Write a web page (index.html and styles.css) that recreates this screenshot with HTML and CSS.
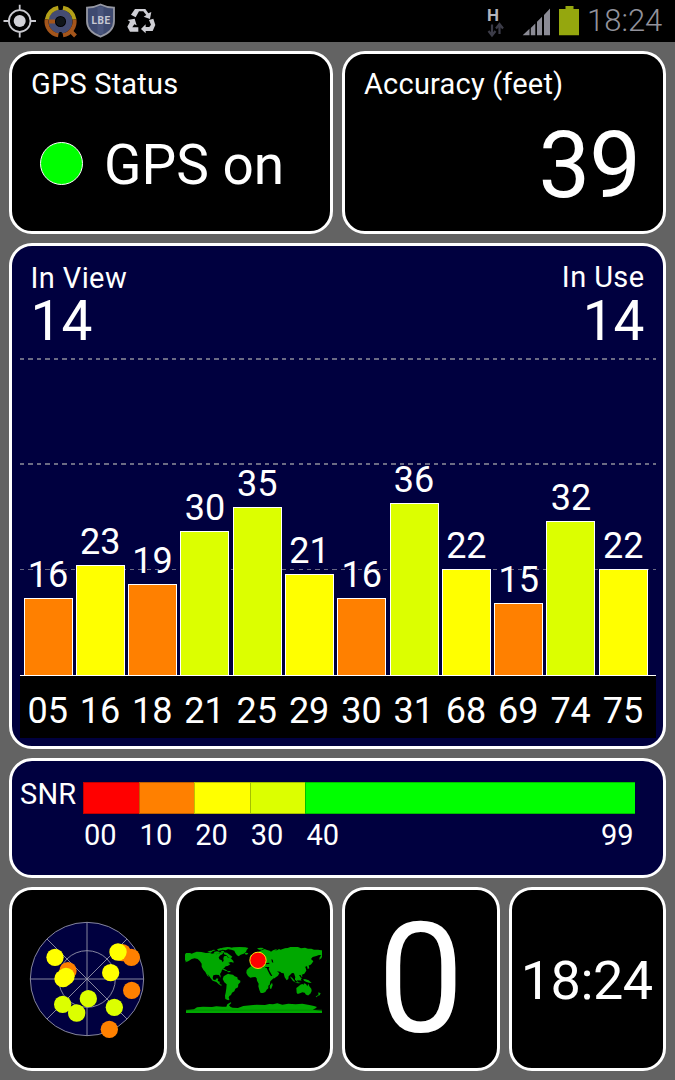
FILE: index.html
```html
<!DOCTYPE html>
<html lang="en">
<head>
  <meta charset="UTF-8" />
  <meta name="viewport" content="width=device-width, initial-scale=1.0"/>
  <title>GPS Status</title>
  <link rel="stylesheet" href="styles.css">
</head>
<body>
  <div class="statusbar">
    <svg class="tray" width="160" height="42" viewBox="0 0 160 42">
      <!-- location -->
      <g fill="none" stroke="#c9c9cf" stroke-width="1.8">
        <circle cx="19.700" cy="21" r="10.800"/>
        <path d="M19.700 4.800v6M19.700 31.500v6M3.500 21h6M30 21h6"/>
      </g>
      <circle cx="19.700" cy="21" r="6" fill="#d2d2d8"/>
      <!-- ring -->
      <circle cx="60.500" cy="21.500" r="8.800" fill="none" stroke="#454c72" stroke-width="6.500"/>
      <g fill="none" stroke-width="4">
        <path d="M46.800 19.500a14 14 0 0 1 11.500-11.800M63 7.700a14 14 0 0 1 11.500 11.800" stroke="#b3a018"/>
        <path d="M46.600 19.500a14 14 0 0 0 11.700 15.800M63 35.300a14 14 0 0 0 11.500-15.800" stroke="#a4551b"/>
        <path d="M49 21.500h6M69.500 30l6 6" stroke="#a4551b" stroke-width="4"/>
      </g>
      <circle cx="60.500" cy="21.500" r="4.600" fill="#10151a"/>
      <path d="M60.500 5v5M60.500 32v5" stroke="#000" stroke-width="2.500"/>
      <!-- shield -->
      <path d="M100.500 4.500c4 2 8.500 3 13.500 3.200v13.500c0 7.500-6 12.500-13.500 15.500C93 33.700 87 28.700 87 21.200V7.700c5-.2 9.500-1.200 13.500-3.200z" fill="#3e4a70" stroke="#9698a3" stroke-width="1.800"/>
      <path d="M100.500 7v27" stroke="#5a6790" stroke-width="6" opacity=".4"/>
      <text class="lbe" x="101" y="23.500">LBE</text>
      <!-- recycle -->
      <g fill="#cfcfd5" transform="scale(.3333)">
        <path d="M393 44l12-17h31l9 13 9-4-4 21-19-7 8-5-9-11h-13l-10 18z"/>
        <path d="M447 60l13-4 6 19-8 18h-21v7l-14-13 14-14v8h11l5-7z"/>
        <path d="M383 60l21-4 6 20-7-3-6 9h18v13h-25l-8-15 8-15z"/>
      </g>
    </svg>
    <svg class="signals" width="100" height="42" viewBox="482 0 100 42">
      <text class="hspa" x="487" y="20.700">H</text>
      <path d="M492 24.500v11M488.500 31l3.500 4.500 3.500-4.500M499.500 34v-9.500M496 28.500l3.500-4.500 3.500 4.500" fill="none" stroke="#3c3c48" stroke-width="2.200"/>
      <path d="M522.700 35.300l6.800-6.500v6.500zM530.800 28l4.500-4.500v11.800h-4.500zM537 21.800l5-5v18.500h-5zM544 15l6-6.500v26.800h-6z" fill="#8b8b95"/>
      <path d="M565.500 6h8v3h5.500v26.300h-20V9h6.500z" fill="#95a70e"/>
    </svg>
    <span class="time">18:24</span>
  </div>

  <div class="screen">
    <div class="panel status">
      <div class="title">GPS Status</div>
      <div class="state"><span class="dot"></span>GPS on</div>
    </div>

    <div class="panel accuracy">
      <div class="title">Accuracy (feet)</div>
      <div class="feet">39</div>
    </div>

    <div class="panel blue chart">
      <div class="counts">
        <div>
          <div class="title">In View</div>
          <div class="count">14</div>
        </div>
        <div class="in-use">
          <div class="title">In Use</div>
          <div class="count">14</div>
        </div>
      </div>
      <div class="plot">
        <div class="line line1"></div>
        <div class="line line2"></div>
        <div class="line line3"></div>
        <div class="sat"><span>16</span><div class="bar orange" style="height: 77px"></div></div>
        <div class="sat"><span>23</span><div class="bar yellow" style="height: 110px"></div></div>
        <div class="sat"><span>19</span><div class="bar orange" style="height: 91px"></div></div>
        <div class="sat"><span>30</span><div class="bar lime" style="height: 144px"></div></div>
        <div class="sat"><span>35</span><div class="bar lime" style="height: 168px"></div></div>
        <div class="sat"><span>21</span><div class="bar yellow" style="height: 101px"></div></div>
        <div class="sat"><span>16</span><div class="bar orange" style="height: 77px"></div></div>
        <div class="sat"><span>36</span><div class="bar lime" style="height: 172px"></div></div>
        <div class="sat"><span>22</span><div class="bar yellow" style="height: 106px"></div></div>
        <div class="sat"><span>15</span><div class="bar orange" style="height: 72px"></div></div>
        <div class="sat"><span>32</span><div class="bar lime" style="height: 154px"></div></div>
        <div class="sat"><span>22</span><div class="bar yellow" style="height: 106px"></div></div>
      </div>
      <div class="ids">
        <span>05</span><span>16</span><span>18</span><span>21</span><span>25</span><span>29</span>
        <span>30</span><span>31</span><span>68</span><span>69</span><span>74</span><span>75</span>
      </div>
    </div>

    <div class="panel blue snr">
      <div class="title">SNR</div>
      <div class="scale">
        <div class="step"><div class="red"></div><span>00</span></div>
        <div class="step"><div class="orange"></div><span>10</span></div>
        <div class="step"><div class="yellow"></div><span>20</span></div>
        <div class="step"><div class="lime"></div><span>30</span></div>
        <div class="step rest"><div class="green"></div><p><span>40</span><span>99</span></p></div>
      </div>
    </div>

    <div class="tiles">
      <div class="panel tile">
        <svg class="radar" width="124" height="124" viewBox="76 96 372 372">
          <g fill="none" stroke="#9a9aae" stroke-width="2.600">
            <circle cx="262" cy="282" r="170" fill="#00003f"/>
            <circle cx="262" cy="282" r="85"/>
            <path d="M262 112v340M92 282h340M142 162l240 240M382 162L142 402"/>
          </g>
          <g fill="#ff8000">
            <circle cx="368" cy="203" r="26"/>
            <circle cx="395" cy="217" r="26"/>
            <circle cx="205" cy="257" r="26"/>
            <circle cx="396" cy="316" r="26"/>
            <circle cx="329" cy="433" r="26"/>
          </g>
          <g fill="#ffff00">
            <circle cx="355" cy="201" r="26"/>
            <circle cx="166" cy="217" r="26"/>
            <circle cx="333" cy="263" r="26"/>
            <circle cx="199" cy="274" r="26"/>
            <circle cx="190" cy="281" r="26"/>
          </g>
          <g fill="#dcff00">
            <circle cx="266" cy="341" r="26"/>
            <circle cx="189" cy="358" r="26"/>
            <circle cx="231" cy="384" r="26"/>
            <circle cx="344" cy="367" r="26"/>
          </g>
        </svg>
      </div>

      <div class="panel tile">
        <svg class="map" width="137" height="66" viewBox="30 51 411 198">
          <g fill="#00a800">
            <!-- north america -->
            <path d="M33 69h12l5 2 7-3 8-3 14 1 14 3 10-1 8 3 9-2 5 4 9-3 3-4 8 2-3 5-6 3-5 6 2 6 7 3 3 6 3-5-1-7 2-6 8-2 4 6 5-1 5 4 6 7 1 5-8-2-8 2 6 5-8 5-6 1-5 6-6 4-2 7-4 6 2 6-1 5-4-8-9-1-8 2-2 8 3 6 6-1 3-4 5 1-2 7 6 2 0 7 7 3-3 2-7-4-7-7-11-4-6-7-5-8-5-5 5 9-5-4-6-11-6-7-5-9 0-9-5-7-7-7-9-2-9 2-8 5-6 3-10 3 9-5-8-3 1-5-8-2 6-3z"/>
            <path d="M97 65l9-3 8 2-7 4zM108 61l9-2 5 2-8 2zM116 66l10-2 9 2-3 5-11 1zM126 58l12-4 9 2-8 5-9 1zM137 63l8-1 4 5-7 1zM142 53l15-2 12 1-9 5-8 4-9-2zM146 67l10 1 9 7 7 5-4 5-8-3-5-6-8-3z"/>
            <!-- greenland, iceland -->
            <path d="M160 55l16-3 18-1 17 1 9 2-5 6-2 6-7 5-9 3-6 5-5-3-5-7-3-7-9-3-9-1zM209 70l6-2 5 2-4 4-6-1z"/>
            <path d="M140 118l8-1 10 5-5 1-7-3zM156 124l8-1 4 3-9 1z"/>
            <!-- south america -->
            <path d="M151 136l8-5 5 2 10 1 5 5 8 3 1 6 8 4 0 5-6 6-1 9-8 4-3 8-7 4-3 7-5 3-2 5 2 5-3 3-9-4-1-10 2-9 2-13 1-12-7-6-5-10 3-8z"/>
            <path d="M156 202l6 4 1 3-7-1-5-5z"/>
            <!-- europe and asia -->
            <path d="M226 103l0-7 8-1 1-6-5-4 9-2 7-5 5-4-3-5 5-5 8-4 8-3 7 3 8 2 4 3 6-4 12 0 6-4 5 2 6-2 7-2 8-1 11-4 13-1 9 3 7 3 12-2 9 3 10 0 8 3 12 0 10 2 11-1 14 4 0 3-7 2 3 3-10 1-7 3-4 9-6 4 1-7 5-6-7-1-8 3-11 3-5 6 7 7-5 7-5 5-4 0 2 9-5 2-2-8-7-1 3 6 2 8-6 9-9 4-7 0 6 9-3 7-4 1-3-5-4-2 5 13-5-6-3-10-4-12-6-1-6 6-4 4-1 8-5 4-6-9-3-12-6-1-5-4-9-1 7 6-4 7-13 9-4-8-7-13-4-8 2-6-12 0-2 4-5-3-1-7-8-5 5 8-3 3-6-8-8-2-6 6-7 7z"/>
            <path d="M224 83l3-9 4 1 3 8 2 4-8 1zM246 55l11-2 10 1-7 5-8 0zM292 66l4-6 12-4-9 6zM323 59l8-3 8 1-7 3zM357 61l9-1 5 3-9 1z"/>
            <path d="M387 109l5-5 4-8 2 4-3 8-6 4zM394 85l4-1 2 7-3 4z"/>
            <!-- africa -->
            <path d="M224 112l6-5 9-1 11 0 1 5 9 3 6-2 9 2 4 9 5 10 4 5 9 0-3 8-8 8-2 10-4 3 0 8-5 4-4 7-7 3-7 0-4-9-3-11 1-8-5-9-1-7-4-4-8 1-7 1-7-5-5-9 1-8 4-5z"/>
            <path d="M291 158l2 7-4 11-4 0-1-8z"/>
            <!-- islands and australia -->
            <path d="M345 139l7 5 7 8 1 4-6-3-6-8zM360 144l8-7 4 4-2 8-5 4-5-4zM359 157l10 0 9 2-9 1zM374 145l7-2-3 5 1 5-4-2zM376 123l3 2-1 7 5 7-4 1-4-9zM385 147l7 1 9 3 9 8-8-1-9-3-6-3z"/>
            <path d="M364 174l7-5 5-5 6-2 4 2 1-4 6 2 4 7 3-8 3 8 6 7 1 7-4 8-6 5-7-2-4-6-7-1-7 3-7 2-3-4z"/>
            <path d="M396 192l6 0-2 4-3 0zM430 187l7 3-3 6-4 1zM428 196l3 0-7 6-2-2z"/>
            <!-- antarctica -->
            <path d="M33 241l24-3 9-6 18-2 27 1 13-2 18 1 12 0 3-7 10-6 2 2-7 7 5 5 6 2 16 1 16-6 22-2 18-2 25 1 13-3 11 1 13-3 15 4 18-3 22 2 20-2 21 4 14 3 9 3-4 4-9 4 28 3v9H33z"/>
          </g>
          <path d="M33 240.500h408" stroke="#008000" stroke-width="2"/>
          <path d="M264 98l8 2 10-2 2 3-10 2zM289 88l4 1 2 9-4-1z" fill="#000"/>
          <circle cx="249" cy="91" r="24.500" fill="#ff0000" stroke="#ffe010" stroke-width="3"/>
        </svg>
      </div>

      <div class="panel tile speed">0</div>
      <div class="panel tile clock">18:24</div>
    </div>
  </div>
</body>
</html>
```

FILE: styles.css
```css
* {
  box-sizing: border-box;
}

body {
  margin: 0;
  height: 1080px;
  background-color: #636363;
  color: #fff;
  font-family: Roboto, sans-serif;
  overflow: hidden;
}

.statusbar {
  display: flex;
  height: 42px;
  background-color: #000;
}

.signals {
  margin-left: 322px;
}

.time {
  margin-left: 5px;
  font-size: 31px;
  font-weight: 300;
  line-height: 42px;
  color: #92929c;
}

.lbe {
  font-size: 10px;
  font-weight: bold;
  letter-spacing: 0.6px;
  fill: #c8cad4;
  text-anchor: middle;
}

.hspa {
  font-size: 17px;
  font-weight: bold;
  fill: #b4b4bc;
}

.screen {
  display: grid;
  grid-template-columns: 1fr 1fr;
  grid-template-rows: 183px 506px 120px 184px;
  gap: 9px;
  padding: 9px;
}

.panel {
  border: 3px solid #fff;
  border-radius: 23px;
  background-color: #000;
}

.blue {
  background-color: #00003f;
}

.title {
  font-size: 29px;
  line-height: 30px;
  letter-spacing: 0.2px;
}

.status {
  padding: 15px 18px 0 19px;
}

.state {
  display: flex;
  align-items: center;
  margin-top: 34px;
  font-size: 55px;
  line-height: 64px;
}

.dot {
  width: 43px;
  height: 43px;
  margin: -3px 21px 0 9px;
  border: 1.5px solid #fff;
  border-radius: 50%;
  background-color: #00ff00;
}

.accuracy {
  padding: 15px 23px 0 19px;
}

.feet {
  margin-top: 18px;
  font-size: 92px;
  line-height: 98px;
  letter-spacing: -1px;
  text-align: right;
}

.chart,
.snr,
.tiles {
  grid-column: 1 / 3;
}

.chart {
  display: flex;
  flex-direction: column;
  padding: 17px 7.5px 0;
}

.counts {
  display: flex;
  justify-content: space-between;
  height: 86px;
  padding: 0 11px;
}

.chart .title {
  letter-spacing: 0.4px;
}

.in-use {
  text-align: right;
}

.in-use .title {
  margin-top: -1px;
  margin-bottom: 7px;
}

.count {
  margin-top: 6px;
  font-size: 55px;
  line-height: 45px;
}

.plot {
  position: relative;
  display: flex;
  height: 327px;
  padding-left: 4px;
  border-bottom: 1px solid #fff;
}

.line {
  position: absolute;
  left: 0;
  right: 0;
  height: 2px;
  background: repeating-linear-gradient(90deg, #6c6c84 0, #6c6c84 4.4px, transparent 4.4px, transparent 8.44px);
}

.line1 {
  top: 9px;
}

.line2 {
  top: 114px;
}

.line3 {
  top: 220px;
  height: 1px;
}

.sat {
  position: relative;
  display: flex;
  flex-direction: column;
  justify-content: flex-end;
  width: 52.3px;
  padding-right: 3.3px;
  font-size: 36px;
  line-height: 42px;
  text-align: center;
}

.bar {
  margin-top: 2px;
  border: 1px solid #fff;
  border-bottom: 0;
}

.red {
  background-color: #ff0000;
}

.orange {
  background-color: #ff8000;
}

.yellow {
  background-color: #ffff00;
}

.lime {
  background-color: #dcff00;
}

.green {
  background-color: #00ff00;
}

.ids {
  display: flex;
  height: 62px;
  padding: 13px 0 0 4px;
  background-color: #000;
  font-size: 36px;
  line-height: 44px;
}

.ids span {
  width: 52.3px;
  padding-right: 4px;
  text-align: center;
}

.snr {
  display: flex;
  padding: 18px 28.5px 0 8px;
}

.snr .title {
  width: 63px;
}

.scale {
  display: flex;
  flex: 1;
  margin-top: 2.5px;
  font-size: 29px;
  line-height: 42px;
}

.step {
  width: 55.6px;
}

.step div {
  height: 32px;
  border: 1px solid rgba(0, 0, 0, 0.25);
  border-right: 0;
}

.step span {
  margin: 0 1px;
}

.rest {
  flex: 1;
}

.rest p {
  display: flex;
  justify-content: space-between;
  margin: 0;
}

.tiles {
  display: grid;
  grid-template-columns: repeat(4, 1fr);
  grid-template-rows: 184px;
  gap: 9px;
}

.tile {
  display: flex;
  justify-content: center;
  align-items: center;
}

.radar {
  margin-right: 1px;
}

.map {
  margin: 2px 1px 0 0;
}

.speed {
  padding-top: 2px;
  font-size: 154px;
  line-height: 176px;
}

.clock {
  padding: 2px 1px 0 0;
  font-size: 54px;
  letter-spacing: -0.5px;
}
```
